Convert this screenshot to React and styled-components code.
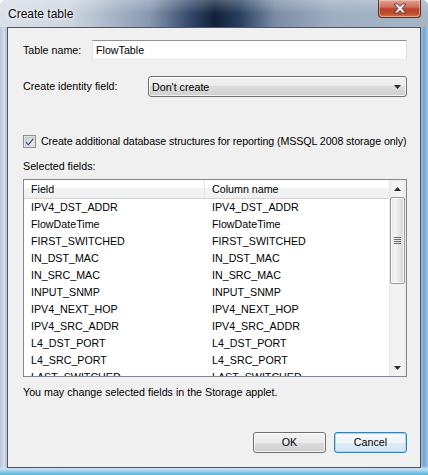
import React from "react";
import styled, { createGlobalStyle } from "styled-components";

const GlobalStyle = createGlobalStyle`
  html, body {
    margin: 0;
    padding: 0;
    background: #ffffff;
  }
  body {
    font-family: "Liberation Sans", Arial, sans-serif;
    font-size: 10.7px;
    color: #000;
  }
`;

const fields = [
  "IPV4_DST_ADDR",
  "FlowDateTime",
  "FIRST_SWITCHED",
  "IN_DST_MAC",
  "IN_SRC_MAC",
  "INPUT_SNMP",
  "IPV4_NEXT_HOP",
  "IPV4_SRC_ADDR",
  "L4_DST_PORT",
  "L4_SRC_PORT",
  "LAST_SWITCHED",
];

function CheckIcon() {
  return (
    <CheckBox width="13" height="13" viewBox="0 0 13 13">
      <defs>
        <linearGradient id="cbg" x1="0" y1="0" x2="1" y2="1">
          <stop offset="0" stopColor="#c6cbd3" />
          <stop offset="1" stopColor="#f7f7f7" />
        </linearGradient>
      </defs>
      <rect x="0.5" y="0.5" width="12" height="12" fill="#f4f4f4" stroke="#8e8f8f" />
      <rect x="2" y="2" width="9" height="9" fill="url(#cbg)" stroke="#b4b8bf" strokeWidth="0.6" />
      <path d="M2.8 6.2 L5.2 8.9 L10.2 3 L10.2 4.8 L5.3 10.4 L2.8 7.8 Z" fill="#21397a" />
    </CheckBox>
  );
}

function Arrow({ up }) {
  return (
    <svg width="7" height="4" viewBox="0 0 7 4">
      {up ? (
        <path d="M0 4 L3.5 0 L7 4 Z" fill="#2b2b2b" />
      ) : (
        <path d="M0 0 L7 0 L3.5 4 Z" fill="#2b2b2b" />
      )}
    </svg>
  );
}

function CloseGlyph() {
  return (
    <svg width="14" height="11" viewBox="0 0 14 11">
      <path
        d="M1 1 L4.5 1 L7 3.6 L9.5 1 L13 1 L9 5.5 L13 10 L9.5 10 L7 7.4 L4.5 10 L1 10 L5 5.5 Z"
        fill="#ffffff"
        stroke="#5a2e28"
        strokeWidth="0.9"
        strokeLinejoin="round"
      />
    </svg>
  );
}

export default function App() {
  return (
    <>
      <GlobalStyle />
      <Window>
        <TitleBar>
          <Title>Create table</Title>
          <CloseButton>
            <CloseGlyph />
          </CloseButton>
        </TitleBar>
        <Client>
          <FormRow>
            <Label width={69}>Table name:</Label>
            <TextInput>FlowTable</TextInput>
          </FormRow>
          <FormRow gap={16}>
            <Label width={125}>Create identity field:</Label>
            <Combo>
              <span>Don't create</span>
              <Arrow />
            </Combo>
          </FormRow>
          <CheckRow>
            <CheckIcon />
            <span>Create additional database structures for reporting (MSSQL 2008 storage only)</span>
          </CheckRow>
          <SectionLabel>Selected fields:</SectionLabel>
          <ListBox>
            <ListContent>
              <Header>
                <HeaderCell width={181}>Field</HeaderCell>
                <HeaderCell>Column name</HeaderCell>
              </Header>
              <Rows>
                {fields.map((f) => (
                  <Row key={f}>
                    <Cell width={181}>{f}</Cell>
                    <Cell>{f}</Cell>
                  </Row>
                ))}
              </Rows>
            </ListContent>
            <ScrollBar>
              <ScrollButton>
                <Arrow up />
              </ScrollButton>
              <Thumb>
                <Grip />
              </Thumb>
              <Track />
              <ScrollButton>
                <Arrow />
              </ScrollButton>
            </ScrollBar>
          </ListBox>
          <Note>You may change selected fields in the Storage applet.</Note>
          <ButtonRow>
            <Button>OK</Button>
            <Button focused>Cancel</Button>
          </ButtonRow>
        </Client>
      </Window>
    </>
  );
}

const Window = styled.div`
  width: 428px;
  height: 475px;
  box-sizing: border-box;
  display: flex;
  flex-direction: column;
  border-radius: 6px 6px 0 0;
  background:
    linear-gradient(180deg, rgba(255, 255, 255, 0) 0px, rgba(255, 255, 255, 0) 466px, #c9e2f2 469px, #5fb9e0 474px),
    linear-gradient(90deg, #b7c4d3 0px, #d6dee8 4px, #aebdcf 7px, #b8c5d4 200px, #a9bccf 421px, #6ea6d6 424px, #9cc6ea 428px);
  overflow: hidden;
`;

const TitleBar = styled.div`
  height: 27px;
  flex-shrink: 0;
  display: flex;
  align-items: flex-start;
  padding-left: 8px;
  background:
    linear-gradient(180deg, rgba(255, 255, 255, 0.25) 0px, rgba(255, 255, 255, 0) 14px),
    linear-gradient(
      90deg,
      #d9e0e8 0px,
      #cdd6e0 70px,
      #8798b0 150px,
      #33486a 190px,
      #0f2038 215px,
      #28405f 240px,
      #7a8ca5 275px,
      #9eadc0 330px,
      #a7b5c6 428px
    );
`;

const Title = styled.div`
  font-family: "Liberation Sans", Arial, sans-serif;
  font-size: 12px;
  line-height: 14px;
  padding-top: 7px;
  color: #0a0a0a;
  text-shadow: 0 0 6px #ffffff, 0 0 3px #ffffff;
`;

const CloseButton = styled.div`
  margin-left: auto;
  margin-right: 7px;
  width: 43px;
  height: 18px;
  box-sizing: border-box;
  border: 1px solid #5b2f2a;
  border-top: none;
  border-radius: 0 0 4px 4px;
  display: flex;
  align-items: center;
  justify-content: center;
  background: linear-gradient(180deg, #e2a497 0px, #cf6e5a 7px, #b9402a 9px, #c4512f 14px, #de8a63 18px);
  box-shadow: inset 0 0 0 1px rgba(255, 220, 210, 0.45);
`;

const Client = styled.div`
  flex: 1;
  margin: 0 7px 7px 7px;
  box-sizing: border-box;
  border: 1px solid #4d5560;
  background: #f0f0f0;
  padding: 12px 13px 14px 15px;
  display: flex;
  flex-direction: column;
`;

const FormRow = styled.div`
  display: flex;
  align-items: center;
  margin-top: ${(p) => p.gap || 0}px;
`;

const Label = styled.div`
  width: ${(p) => p.width}px;
  flex-shrink: 0;
  line-height: 13px;
`;

const TextInput = styled.div`
  flex: 1;
  height: 20px;
  box-sizing: border-box;
  border: 1px solid #abadb3;
  border-top-color: #8e9297;
  border-left-color: #e2e3ea;
  border-right-color: #dbdfe6;
  border-bottom-color: #e3e9ef;
  background: #fff;
  padding-left: 3px;
  line-height: 18px;
`;

const Combo = styled.div`
  flex: 1;
  height: 21px;
  box-sizing: border-box;
  border: 1px solid #707070;
  border-radius: 3px;
  background: linear-gradient(180deg, #f2f2f2 0%, #ebebeb 50%, #dddddd 50%, #cfcfcf 100%);
  box-shadow: inset 0 0 0 1px rgba(255, 255, 255, 0.7);
  display: flex;
  align-items: center;
  justify-content: space-between;
  padding: 0 5px 0 3px;
`;

const CheckRow = styled.div`
  display: flex;
  align-items: center;
  gap: 5px;
  margin-top: 38px;
  height: 13px;
  line-height: 13px;
  white-space: nowrap;
  letter-spacing: -0.1px;
`;

const CheckBox = styled.svg`
  flex-shrink: 0;
  display: block;
`;

const SectionLabel = styled.div`
  margin-top: 12px;
  line-height: 13px;
`;

const ListBox = styled.div`
  margin-top: 6px;
  height: 198px;
  box-sizing: border-box;
  border: 1px solid #828790;
  background: #fff;
  display: flex;
`;

const ListContent = styled.div`
  flex: 1;
  min-width: 0;
  display: flex;
  flex-direction: column;
  overflow: hidden;
`;

const Header = styled.div`
  height: 19px;
  flex-shrink: 0;
  box-sizing: border-box;
  display: flex;
  border-bottom: 1px solid #d5d5d5;
  background: linear-gradient(180deg, #ffffff 0%, #ffffff 45%, #f3f4f6 46%, #eff0f2 100%);
`;

const HeaderCell = styled.div`
  width: ${(p) => (p.width ? `${p.width}px` : "auto")};
  flex: ${(p) => (p.width ? "none" : 1)};
  box-sizing: border-box;
  padding-left: 7px;
  line-height: 18px;
  border-right: ${(p) => (p.width ? "1px solid #e3e4e6" : "none")};
`;

const Rows = styled.div`
  flex: 1;
  overflow: hidden;
`;

const Row = styled.div`
  display: flex;
  height: 17px;
  line-height: 17px;
`;

const Cell = styled.div`
  width: ${(p) => (p.width ? `${p.width}px` : "auto")};
  flex: ${(p) => (p.width ? "none" : 1)};
  box-sizing: border-box;
  padding-left: 7px;
  white-space: nowrap;
`;

const ScrollBar = styled.div`
  width: 17px;
  flex-shrink: 0;
  display: flex;
  flex-direction: column;
  background: linear-gradient(90deg, #e5e5e5 0px, #f3f3f3 3px, #f3f3f3 14px, #e8e8e8 17px);
`;

const ScrollButton = styled.div`
  height: 17px;
  flex-shrink: 0;
  display: flex;
  align-items: center;
  justify-content: center;
`;

const Thumb = styled.div`
  height: 87px;
  flex-shrink: 0;
  margin: 0 1px 0 1px;
  box-sizing: border-box;
  border: 1px solid #9a9a9a;
  border-radius: 2px;
  background: linear-gradient(90deg, #e4e4e4 0%, #f3f3f3 30%, #e9e9e9 55%, #d5d5d5 100%);
  box-shadow: inset 0 0 0 1px rgba(255, 255, 255, 0.8);
  display: flex;
  align-items: center;
  justify-content: center;
`;

const Grip = styled.div`
  width: 7px;
  height: 7px;
  background: repeating-linear-gradient(180deg, #6a6a6a 0px, #6a6a6a 1px, transparent 1px, transparent 2px);
`;

const Track = styled.div`
  flex: 1;
`;

const Note = styled.div`
  margin-top: 9px;
  line-height: 13px;
`;

const ButtonRow = styled.div`
  margin-top: auto;
  display: flex;
  justify-content: flex-end;
  gap: 8px;
`;

const Button = styled.div`
  width: 73px;
  height: 21px;
  box-sizing: border-box;
  border: 1px solid ${(p) => (p.focused ? "#3c7fb1" : "#707070")};
  border-radius: 3px;
  background: ${(p) =>
    p.focused
      ? "linear-gradient(180deg, #f6fbfd 0%, #eef6fb 50%, #dfedf6 50%, #d3e6f2 100%)"
      : "linear-gradient(180deg, #f2f2f2 0%, #ebebeb 50%, #dddddd 50%, #cfcfcf 100%)"};
  box-shadow: ${(p) =>
    p.focused ? "inset 0 0 0 1px #9cdcf6" : "inset 0 0 0 1px rgba(255, 255, 255, 0.75)"};
  display: flex;
  align-items: center;
  justify-content: center;
  line-height: 13px;
`;
